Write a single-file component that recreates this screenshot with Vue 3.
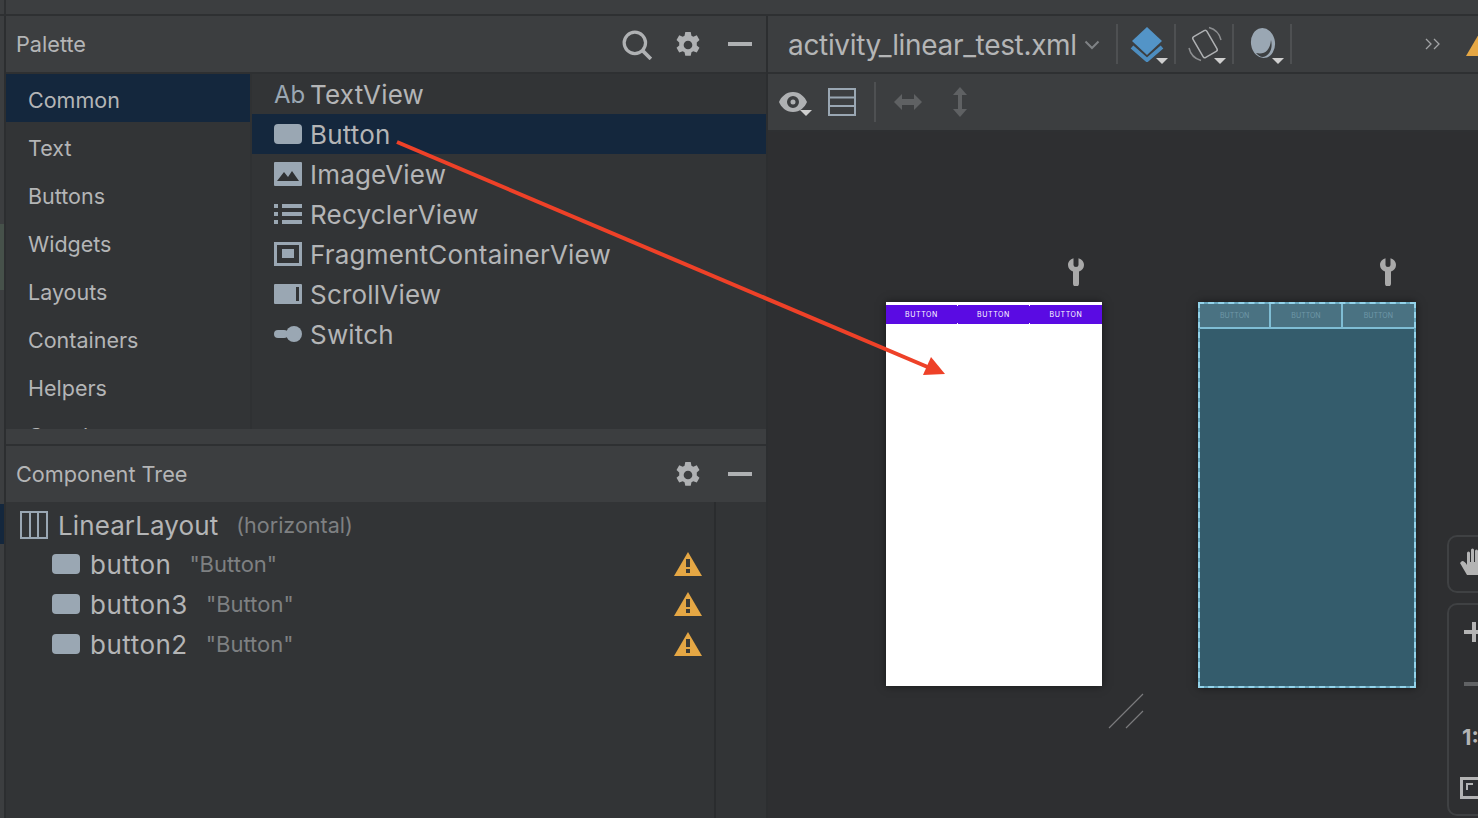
<script setup>
const categories = ['Common', 'Text', 'Buttons', 'Widgets', 'Layouts', 'Containers', 'Helpers', 'Google']
const widgets = [
  { name: 'TextView', icon: 'text' },
  { name: 'Button', icon: 'button', selected: true },
  { name: 'ImageView', icon: 'image' },
  { name: 'RecyclerView', icon: 'list' },
  { name: 'FragmentContainerView', icon: 'fragment' },
  { name: 'ScrollView', icon: 'scroll' },
  { name: 'Switch', icon: 'switch' },
]
const treeItems = [
  { id: 'button', label: '"Button"' },
  { id: 'button3', label: '"Button"' },
  { id: 'button2', label: '"Button"' },
]
const phoneButtons = ['BUTTON', 'BUTTON', 'BUTTON']
const wrenchPath =
  'M5.500 .3v6.700a2.500 2 0 0 0 5 0V.3c3.300 1 5.500 3.700 5.500 6.700 0 3-2 5.500-5 6.500v12a3 3 0 0 1-6 0v-12c-3-1-5-3.500-5-6.500 0-3 2.200-5.700 5.500-6.700z'
const gearPath =
  'M10.500 1h5l.7 3.400 1.700.9 3.200-1.200 2.500 4.300-2.500 2.200v2.800l2.500 2.200-2.500 4.300-3.200-1.200-1.700.9-.7 3.400h-5l-.7-3.400-1.700-.9-3.200 1.200-2.500-4.300 2.500-2.200v-2.800L2.400 8.400l2.500-4.300 3.200 1.200 1.700-.9zM13 9a4 4 0 1 0 0 8 4 4 0 0 0 0-8z'
</script>

<template>
  <main class="ide">
    <div class="top-strip" />
    <div class="workspace">
      <div class="rail">
        <span class="rail-green" />
        <span class="rail-blue" />
      </div>

      <aside class="side">
        <header class="panel-head">
          <span class="panel-title">Palette</span>
          <svg class="head-icon search" viewBox="1 1 28 28" width="30" height="30">
            <circle cx="13" cy="13" r="10" fill="none" stroke="#afb1b3" stroke-width="3" />
            <path d="M20 20l8 8" stroke="#afb1b3" stroke-width="3.400" />
          </svg>
          <svg class="head-icon" viewBox="1.500 1 23 24" width="26" height="26">
            <path fill="#afb1b3" fill-rule="evenodd" :d="gearPath" />
          </svg>
          <span class="minimize" />
        </header>

        <section class="palette">
          <ul class="categories">
            <li v-for="(cat, i) in categories" :key="cat" :class="{ active: i === 0 }">{{ cat }}</li>
          </ul>
          <ul class="widgets">
            <li v-for="w in widgets" :key="w.name" :class="{ selected: w.selected }">
              <span v-if="w.icon === 'text'" class="ab">Ab</span>
              <svg v-else class="w-icon" viewBox="0 0 28 24" width="28" height="24">
                <rect v-if="w.icon === 'button'" x="0" y="2" width="28" height="20" rx="4" fill="#9aa7b3" />
                <template v-if="w.icon === 'image'">
                  <rect x="0" y="0" width="28" height="24" rx="1" fill="#9aa7b3" />
                  <path d="M3 19l7-9 4 5 4-6 7 10z" fill="#2f3133" />
                </template>
                <template v-if="w.icon === 'list'">
                  <path fill="#9aa7b3" d="M0 2h4v4H0zM8 2h20v4H8zM0 10h4v4H0zM8 10h20v4H8zM0 18h4v4H0zM8 18h20v4H8z" />
                </template>
                <template v-if="w.icon === 'fragment'">
                  <path fill="#9aa7b3" fill-rule="evenodd" d="M0 0h28v24H0zM3 3v18h22V3z" />
                  <rect x="8" y="7" width="12" height="9" fill="#9aa7b3" />
                </template>
                <template v-if="w.icon === 'scroll'">
                  <path fill="#9aa7b3" fill-rule="evenodd" d="M1 2h26a1 1 0 0 1 1 1v18a1 1 0 0 1-1 1H1a1 1 0 0 1-1-1V3a1 1 0 0 1 1-1zM22 5v14h3V5z" />
                </template>
                <template v-if="w.icon === 'switch'">
                  <rect x="0" y="8" width="14" height="8" rx="4" fill="#9aa7b3" />
                  <circle cx="20" cy="12" r="8" fill="#9aa7b3" />
                </template>
              </svg>
              <span class="w-name">{{ w.name }}</span>
            </li>
          </ul>
        </section>

        <div class="splitter" />

        <header class="panel-head tree-head">
          <span class="panel-title">Component Tree</span>
          <svg class="head-icon" viewBox="1.500 1 23 24" width="26" height="26">
            <path fill="#afb1b3" fill-rule="evenodd" :d="gearPath" />
          </svg>
          <span class="minimize" />
        </header>

        <section class="tree">
          <div class="tree-list">
            <div class="tree-row root">
              <svg viewBox="0 0 28 28" width="28" height="28">
                <path fill="none" stroke="#9aa7b3" stroke-width="2" d="M1 1h26v26H1zM10 1v26M18 1v26" />
              </svg>
              <span class="tree-name">LinearLayout</span>
              <span class="tree-label">(horizontal)</span>
            </div>
            <div v-for="item in treeItems" :key="item.id" class="tree-row child">
              <svg viewBox="0 0 28 24" width="28" height="24">
                <rect x="0" y="2" width="28" height="20" rx="4" fill="#9aa7b3" />
              </svg>
              <span class="tree-name">{{ item.id }}</span>
              <span class="tree-label">{{ item.label }}</span>
              <svg class="warn" viewBox="0 0 28 24" width="28" height="24">
                <path d="M14 0l14 24H0z" fill="#e5a744" />
                <path d="M12 7h4v8h-4zM12 17h4v4h-4z" fill="#3a3a36" />
              </svg>
            </div>
          </div>
        </section>
      </aside>

      <section class="design">
        <header class="design-head">
          <span class="file-name">activity_linear_test.xml</span>
          <svg class="chevron" viewBox="0 0 16 10" width="16" height="10">
            <path d="M1.500 1.500L8 8l6.500-6.500" fill="none" stroke="#7f8285" stroke-width="2" />
          </svg>
          <span class="vsep first" />
          <span class="tool">
            <svg viewBox="0 0 34 36" width="34" height="36">
              <path d="M17 1l15 14-15 14L2 15z" fill="#5394c7" />
              <path d="M2 21l15 13 15-13" fill="none" stroke="#4d8dbf" stroke-width="4" />
            </svg>
            <i class="drop" />
          </span>
          <span class="vsep" />
          <span class="tool">
            <svg viewBox="0 0 34 36" width="34" height="36">
              <rect x="9" y="6" width="16" height="24" rx="2" fill="none" stroke="#afb1b3" stroke-width="1.500" transform="rotate(-30 17 18)" />
              <path d="M21 1.500A17 17 0 0 1 33 14M13 34.500A17 17 0 0 1 1 22" fill="none" stroke="#8c8e90" stroke-width="1.500" />
            </svg>
            <i class="drop" />
          </span>
          <span class="vsep" />
          <span class="tool">
            <svg viewBox="0 0 34 36" width="34" height="36">
              <ellipse cx="17" cy="17" rx="12" ry="15" fill="#9aa7b3" transform="rotate(-8 17 17)" />
              <path d="M10 27c8 2 14-2 15-13 2 8-1 16-8 17-3 0-5-2-7-4z" fill="#3c3f41" />
            </svg>
            <i class="drop" />
          </span>
          <span class="vsep" />
          <svg class="more" viewBox="0 0 16 12" width="16" height="12">
            <path d="M1 1l5 5-5 5M9 1l5 5-5 5" fill="none" stroke="#a2a4a6" stroke-width="1.300" />
          </svg>
          <svg class="top-warn" viewBox="0 0 28 24" width="28" height="24">
            <path d="M14 0l14 24H0z" fill="#e5a744" />
          </svg>
        </header>

        <div class="design-tools">
          <span class="tool eye">
            <svg viewBox="0 0 30 24" width="30" height="24">
              <path fill="#afb1b3" fill-rule="evenodd" d="M15 2c7 0 12 5 14 10-2 5-7 10-14 10S3 17 1 12C3 7 8 2 15 2zm0 4a6 6 0 1 0 0 12 6 6 0 0 0 0-12zm0 3.500a2.500 2.500 0 1 1 0 5 2.500 2.500 0 0 1 0-5z" />
            </svg>
            <i class="drop" />
          </span>
          <svg class="stack" viewBox="0 0 28 28" width="28" height="28">
            <path fill="none" stroke="#9aa7b3" stroke-width="2" d="M1 1h26v26H1zM1 9.500h26M1 18h26" />
          </svg>
          <span class="vsep tall" />
          <svg class="arrow-h" viewBox="0 0 28 20" width="28" height="20">
            <path fill="#5f6163" d="M0 10l8-8v5h12V2l8 8-8 8v-5H8v5z" />
          </svg>
          <svg class="arrow-v" viewBox="0 0 16 30" width="16" height="30">
            <path fill="#5f6163" d="M8 0l7 8h-5v14h5l-7 8-7-8h5V8H1z" />
          </svg>
        </div>

        <div class="canvas">
          <svg class="wrench one" viewBox="0 0 16 28" width="16" height="28">
            <path fill="#a9a9a9" :d="wrenchPath" />
          </svg>
          <svg class="wrench two" viewBox="0 0 16 28" width="16" height="28">
            <path fill="#a9a9a9" :d="wrenchPath" />
          </svg>

          <div class="phone">
            <div class="phone-bar">
              <span v-for="(b, i) in phoneButtons" :key="i">{{ b }}</span>
            </div>
          </div>

          <div class="blueprint">
            <div class="blueprint-bar">
              <span v-for="(b, i) in phoneButtons" :key="i">{{ b }}</span>
            </div>
          </div>

          <svg class="resize" viewBox="0 0 36 36" width="36" height="36">
            <path d="M1 35L35 1M18 35L35 18" stroke="#7a7b7d" stroke-width="1.200" fill="none" />
          </svg>

          <div class="float-card hand">
            <svg viewBox="0 0 30 30" width="30" height="30">
              <path fill="#b4b4b4" d="M0 15l2-2c2 0 4 2 5 4V5a1.500 1.500 0 0 1 3 0v9h1V2a1.500 1.500 0 0 1 3 0v12h1V3a1.500 1.500 0 0 1 3 0v24H7z" />
            </svg>
          </div>
          <div class="float-card zoom">
            <span class="plus" />
            <span class="dash" />
            <span class="ratio">1:1</span>
            <span class="fit"><i /></span>
          </div>
        </div>
      </section>
    </div>

    <svg class="callout" viewBox="0 0 1478 818" width="1478" height="818">
      <path d="M397 142L930 368" stroke="#ee4128" stroke-width="4" fill="none" />
      <path d="M945 374L923 375L931 357z" fill="#ee4128" />
    </svg>
  </main>
</template>

<style>
html,
body {
  margin: 0;
  background: #2e2f31;
}
</style>

<style scoped>
.ide {
  position: relative;
  width: 1478px;
  height: 818px;
  overflow: hidden;
  display: flex;
  flex-direction: column;
  background: #3c3e40;
  color: #b4b5b6;
  font-family: Inter, 'Noto Sans', sans-serif;
}

ul {
  list-style: none;
  margin: 0;
  padding: 0;
}

.top-strip {
  height: 14px;
  flex: none;
  background: linear-gradient(90deg, #3c3e40 4px, #2e3032 4px 6px, #3c3e40 6px);
  border-bottom: 2px solid #2e3032;
}

.workspace {
  flex: 1;
  min-height: 0;
  display: flex;
}

.rail {
  width: 4px;
  flex: none;
  display: flex;
  flex-direction: column;
  background: #3c3e40;
  border-right: 2px solid #2c2e30;
}

.rail-green {
  margin-top: 208px;
  height: 66px;
  background: #46514a;
}

.rail-blue {
  margin-top: 214px;
  height: 40px;
  background: #14273d;
}

.side {
  width: 760px;
  flex: none;
  display: flex;
  flex-direction: column;
  border-right: 2px solid #2c2e30;
}

.panel-head {
  height: 56px;
  flex: none;
  display: flex;
  align-items: center;
  padding: 0 14px 0 10px;
  background: #3c3e40;
  border-bottom: 2px solid #2e3032;
}

.panel-title {
  font-size: 21.700px;
  color: #b4b5b6;
  margin-right: auto;
}

.head-icon {
  margin-top: 2px;
}

.head-icon.search {
  margin-right: 23px;
}

.minimize {
  width: 24px;
  height: 4px;
  margin-left: 27px;
  background: #afb1b3;
}

.palette {
  height: 355px;
  flex: none;
  display: flex;
  overflow: hidden;
  background: #323436;
}

.categories {
  width: 244px;
  flex: none;
  border-right: 2px solid #2f3133;
}

.categories li {
  height: 48px;
  box-sizing: border-box;
  display: flex;
  align-items: center;
  padding: 4px 0 0 22px;
  font-size: 21.500px;
}

.categories li.active {
  background: #14273d;
}

.widgets {
  flex: 1;
}

.widgets li {
  height: 40px;
  display: flex;
  align-items: center;
  gap: 8px;
  padding-left: 22px;
  font-size: 26px;
  letter-spacing: 0.2px;
}

.widgets li.selected {
  background: #14273d;
}

.ab {
  width: 28px;
  font-size: 24px;
  letter-spacing: 0;
  color: #9aa7b3;
}

.w-icon {
  flex: none;
}

.splitter {
  height: 15px;
  flex: none;
  background: #3c3e40;
  border-bottom: 2px solid #2e3032;
}

.tree-head {
  border-bottom: 0;
}

.tree {
  flex: 1;
  background: #323436;
}

.tree-list {
  width: 710px;
  height: 100%;
  padding-top: 3px;
  box-sizing: border-box;
  border-right: 2px solid #2a2c2e;
}

.tree-row {
  height: 40px;
  display: flex;
  align-items: center;
  font-size: 26px;
}

.tree-row.root {
  padding-left: 14px;
  gap: 10px;
  margin-bottom: -1px;
  letter-spacing: 0.1px;
}

.tree-row.child {
  padding-left: 46px;
  gap: 10px;
  letter-spacing: 0.5px;
}

.tree-label {
  margin-left: 8px;
  font-size: 22px;
  letter-spacing: 0;
  color: #7e8082;
}

.root .tree-label {
  font-size: 21.500px;
}

.warn {
  margin-left: auto;
  margin-right: 12px;
}

.design {
  flex: 1;
  min-width: 0;
  display: flex;
  flex-direction: column;
}

.design-head {
  height: 56px;
  flex: none;
  display: flex;
  align-items: center;
  padding-left: 20px;
  overflow: hidden;
  border-bottom: 2px solid #2e3032;
}

.file-name {
  flex: none;
  font-size: 28px;
  letter-spacing: -0.33px;
  padding-top: 2px;
}

.chevron {
  flex: none;
  margin: 2px 0 0 7px;
}

.vsep {
  width: 2px;
  height: 40px;
  background: #4e5052;
  flex: none;
  margin: 0 12px 0 10px;
}

.vsep.first {
  margin-left: 16px;
}

.vsep.tall {
  margin: 0 18px 0 18px;
}

.tool {
  position: relative;
  display: flex;
  flex: none;
  width: 34px;
}

.drop {
  position: absolute;
  right: -4px;
  bottom: -2px;
  width: 0;
  height: 0;
  border-left: 6px solid transparent;
  border-right: 6px solid transparent;
  border-top: 6px solid #cfcfcf;
}

.more {
  flex: none;
  margin-left: 121px;
}

.top-warn {
  flex: none;
  margin-left: 25px;
}

.design-tools {
  height: 56px;
  flex: none;
  display: flex;
  align-items: center;
  padding-left: 10px;
  border-bottom: 2px solid #2e3032;
}

.tool.eye {
  width: 30px;
}

.stack {
  margin-left: 20px;
}

.arrow-v {
  margin-left: 30px;
}

.canvas {
  position: relative;
  flex: 1;
  background: #2e2f31;
}

.wrench {
  position: absolute;
  top: 126px;
}

.wrench.one {
  left: 300px;
}

.wrench.two {
  left: 612px;
}

.phone {
  position: absolute;
  left: 118px;
  top: 170px;
  width: 216px;
  height: 384px;
  background: #fff;
  box-shadow: 0 0 8px rgba(0, 0, 0, 0.5);
}

.phone-bar {
  display: grid;
  grid-template-columns: repeat(3, 1fr);
  margin-top: 3px;
  background: #5a0be3;
}

.phone-bar span {
  height: 19px;
  line-height: 19px;
  text-align: center;
  font-size: 7px;
  letter-spacing: 0.6px;
  color: #fff;
  border-right: 1px solid transparent;
  border-image: linear-gradient(#fff 0 2px, transparent 2px 17px, #fff 17px) 1;
}

.phone-bar span:last-child {
  border-right: 0;
}

.blueprint {
  position: absolute;
  left: 430px;
  top: 170px;
  width: 218px;
  height: 386px;
  box-sizing: border-box;
  border: 2px dashed #93d3ea;
  background: linear-gradient(#345c6c, #345c6c) padding-box, linear-gradient(#6aa8bf, #6aa8bf) border-box;
  box-shadow: 0 0 8px rgba(0, 0, 0, 0.5);
}

.blueprint-bar {
  display: grid;
  grid-template-columns: repeat(3, 1fr);
  height: 23px;
  border-bottom: 2px solid #7fbdd4;
}

.blueprint-bar span {
  text-align: center;
  line-height: 23px;
  font-size: 7px;
  color: #6f98a8;
  background: #4a7282;
  border-right: 2px solid #7fbdd4;
}

.blueprint-bar span:last-child {
  border-right: 0;
}

.resize {
  position: absolute;
  left: 340px;
  top: 561px;
}

.float-card {
  position: absolute;
  left: 679px;
  width: 60px;
  box-sizing: border-box;
  border: 2px solid #3f4143;
  border-radius: 10px;
}

.float-card.hand {
  top: 403px;
  height: 58px;
  padding: 11px 0 0 11px;
}

.float-card.zoom {
  top: 471px;
  height: 213px;
}

.plus {
  position: absolute;
  left: 15px;
  top: 25px;
  width: 20px;
  height: 4px;
  background: #b4b4b4;
}

.plus::after {
  content: '';
  position: absolute;
  left: 8px;
  top: -8px;
  width: 4px;
  height: 20px;
  background: #b4b4b4;
}

.dash {
  position: absolute;
  left: 15px;
  top: 77px;
  width: 20px;
  height: 4px;
  background: #606264;
}

.ratio {
  position: absolute;
  left: 13px;
  top: 119px;
  font-size: 22px;
  font-weight: 700;
  color: #b4b4b4;
}

.fit {
  position: absolute;
  left: 11px;
  top: 172px;
  width: 30px;
  height: 16px;
  border: 3px solid #b4b4b4;
}

.fit i {
  position: absolute;
  left: 3px;
  top: 3px;
  width: 5px;
  height: 5px;
  border-left: 2px solid #b4b4b4;
  border-top: 2px solid #b4b4b4;
}

.callout {
  position: absolute;
  left: 0;
  top: 0;
  pointer-events: none;
}
</style>
